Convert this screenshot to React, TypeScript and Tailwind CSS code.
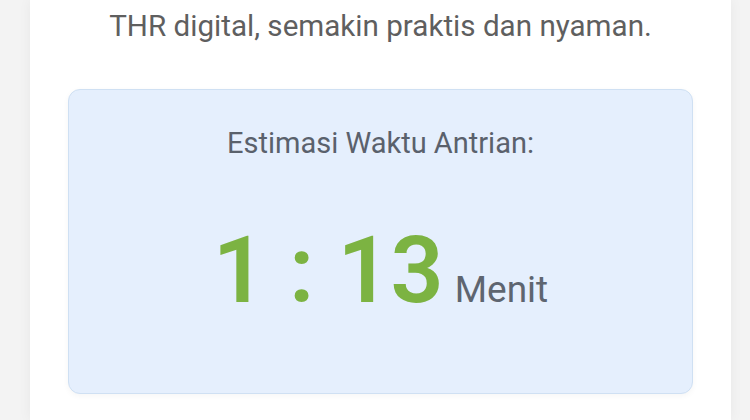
export default function App() {
  return (
    <div className="w-[750px] h-[420px] bg-[#f3f3f3] flex overflow-hidden" style={{ fontFamily: "Roboto, 'Noto Sans', sans-serif" }}>
      <div className="ml-[30px] w-[701px] h-full bg-white px-[38px] shadow-[0_0_12px_rgba(0,0,0,0.05)]">
        <p className="mt-[9px] text-center text-[29.6px] leading-[35px] text-[#5f5f5f]">
          THR digital, semakin praktis dan nyaman.
        </p>
        <div className="mt-[45px] h-[305px] rounded-[12px] border border-[#cfe0f3] bg-[#e5effd] shadow-[0_2px_6px_rgba(0,0,0,0.04)] flex flex-col items-center">
          <p className="mt-[36px] text-[29px] leading-[34px] text-[#5a616c]">Estimasi Waktu Antrian:</p>
          <div className="mt-[64px] flex items-baseline">
            <span className="text-[93px] leading-none font-semibold text-[#7cb342] whitespace-pre">1 : 13</span>
            <span className="ml-[11px] text-[37px] leading-none text-[#5e6570]">Menit</span>
          </div>
        </div>
      </div>
    </div>
  );
}
